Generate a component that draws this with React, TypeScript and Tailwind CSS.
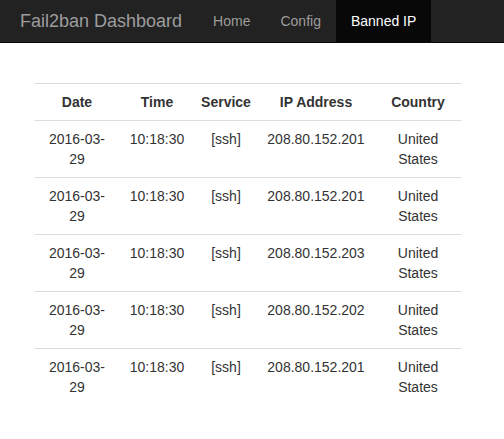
import React from "react";

const rows = [
  { date: "2016-03-29", time: "10:18:30", service: "[ssh]", ip: "208.80.152.201", country: "United States" },
  { date: "2016-03-29", time: "10:18:30", service: "[ssh]", ip: "208.80.152.201", country: "United States" },
  { date: "2016-03-29", time: "10:18:30", service: "[ssh]", ip: "208.80.152.203", country: "United States" },
  { date: "2016-03-29", time: "10:18:30", service: "[ssh]", ip: "208.80.152.202", country: "United States" },
  { date: "2016-03-29", time: "10:18:30", service: "[ssh]", ip: "208.80.152.201", country: "United States" },
];

function App() {
  return (
    <div
      className="min-h-[439px] bg-white text-[14px] leading-[20px] text-[#333]"
      style={{ fontFamily: '"Liberation Sans", Arial, sans-serif' }}
    >
      <nav className="flex h-[43px] items-stretch border-b border-[#080808] bg-[#222]">
        <span className="flex items-center pl-[20px] pr-[16px] text-[18px] text-[#9d9d9d]">
          Fail2ban Dashboard
        </span>
        <span className="flex items-center px-[15px] text-[#9d9d9d]">Home</span>
        <span className="flex items-center px-[15px] text-[#9d9d9d]">Config</span>
        <span className="flex items-center bg-[#080808] px-[15px] text-white">Banned IP</span>
      </nav>
      <div className="pt-[40px]">
        <table className="ml-[35px] w-[426px] table-fixed border-collapse text-center">
          <thead>
            <tr className="border-t border-[#ddd]">
              <th className="w-[84px] border-b border-[#ddd] p-[8px] font-bold">Date</th>
              <th className="w-[76px] border-b border-[#ddd] p-[8px] font-bold">Time</th>
              <th className="w-[62px] border-b border-[#ddd] px-[4px] py-[8px] font-bold">Service</th>
              <th className="w-[118px] border-b border-[#ddd] p-[8px] font-bold">IP Address</th>
              <th className="border-b border-[#ddd] p-[8px] font-bold">Country</th>
            </tr>
          </thead>
          <tbody>
            {rows.map((r, i) => (
              <tr key={i} className="border-t border-[#ddd] align-top">
                <td className="p-[8px]">{r.date}</td>
                <td className="p-[8px]">{r.time}</td>
                <td className="p-[8px]">{r.service}</td>
                <td className="p-[8px]">{r.ip}</td>
                <td className="p-[8px]">{r.country}</td>
              </tr>
            ))}
          </tbody>
        </table>
      </div>
    </div>
  );
}

export default App;
